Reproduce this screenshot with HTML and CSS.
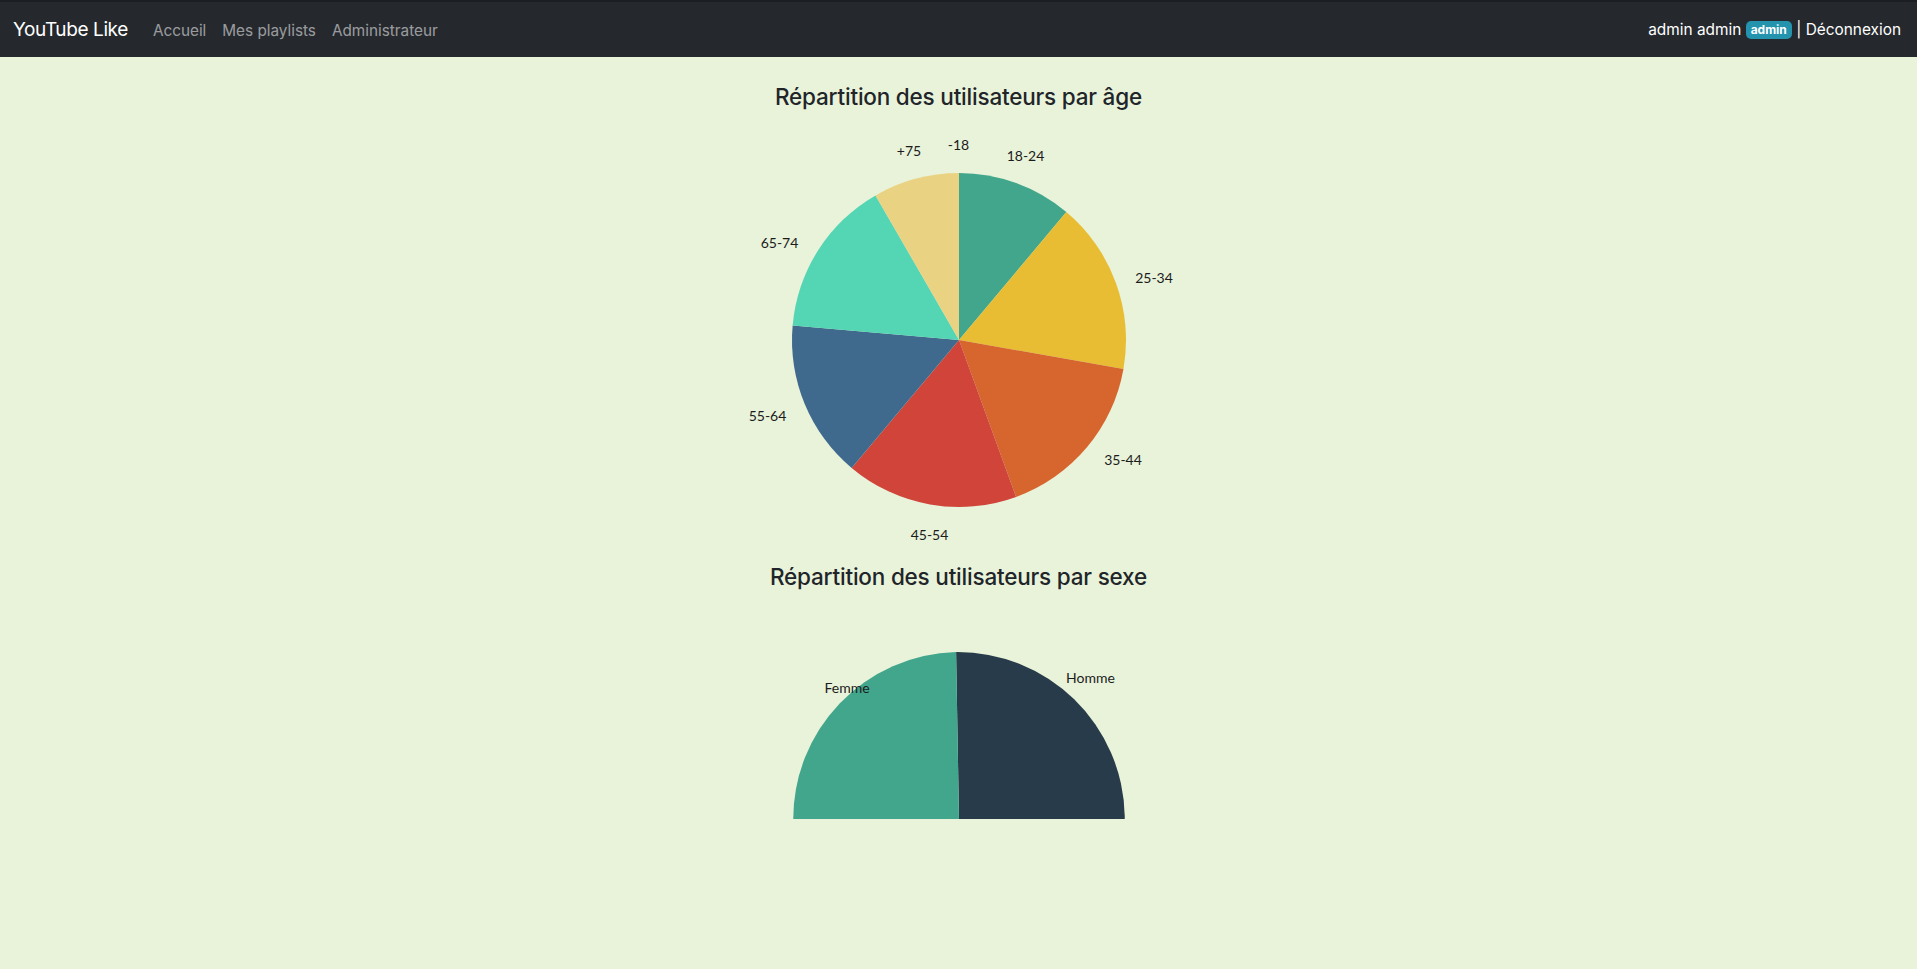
FILE: index.html
```html
<!DOCTYPE html>
<html lang="fr">
<head>
  <meta charset="UTF-8">
  <title>YouTube Like - Statistiques</title>
  <link rel="stylesheet" href="styles.css">
</head>
<body>
  <nav class="navbar">
    <div class="nav-left">
      <a class="brand" href="#">YouTube Like</a>
      <ul class="nav-links">
        <li><a href="#">Accueil</a></li>
        <li><a href="#">Mes playlists</a></li>
        <li><a href="#">Administrateur</a></li>
      </ul>
    </div>
    <div class="nav-right">
      admin admin <span class="badge">admin</span> | <a href="#">Déconnexion</a>
    </div>
  </nav>

  <main class="stats">
    <h4 class="chart-title">Répartition des utilisateurs par âge</h4>
    <svg class="chart chart-age" width="480" height="453" viewBox="0 0 480 453">
      <path d="M240,230 L240,63 A167,167 0 0 1 347.35,102.07 Z" fill="#41a68c"/>
      <path d="M240,230 L347.35,102.07 A167,167 0 0 1 404.46,258.99 Z" fill="#e8bd33"/>
      <path d="M240,230 L404.46,258.99 A167,167 0 0 1 297.12,386.93 Z" fill="#d6652e"/>
      <path d="M240,230 L297.12,386.93 A167,167 0 0 1 132.65,357.93 Z" fill="#d0443a"/>
      <path d="M240,230 L132.65,357.93 A167,167 0 0 1 73.64,215.44 Z" fill="#40698e"/>
      <path d="M240,230 L73.64,215.44 A167,167 0 0 1 156.5,85.38 Z" fill="#54d6b4"/>
      <path d="M240,230 L156.5,85.38 A167,167 0 0 1 240,63 Z" fill="#ead283"/>
      <text x="239.5" y="39.5">-18</text>
      <text x="306.5" y="51">18-24</text>
      <text x="435" y="172.5">25-34</text>
      <text x="404" y="355">35-44</text>
      <text x="210.5" y="430">45-54</text>
      <text x="48.5" y="311">55-64</text>
      <text x="60.5" y="137.5">65-74</text>
      <text x="190" y="46">+75</text>
    </svg>

    <h4 class="chart-title">Répartition des utilisateurs par sexe</h4>
    <svg class="chart chart-sex" width="480" height="229" viewBox="0 0 480 229">
      <path d="M240,229 L237.09,62.03 A167,167 0 0 1 242.91,395.97 Z" fill="#283b4a"/>
      <path d="M240,229 L242.91,395.97 A167,167 0 0 1 237.09,62.03 Z" fill="#41a68c"/>
      <text x="128" y="102.5">Femme</text>
      <text x="371.5" y="92.5">Homme</text>
    </svg>
  </main>
</body>
</html>
```

FILE: styles.css
```css
body {
  margin: 0;
  background-color: #e9f3da;
  font-family: Inter, "Noto Sans", sans-serif;
  color: #212529;
}
a {
  text-decoration: none;
  color: inherit;
}
.navbar {
  height: 55px;
  display: flex;
  flex-flow: row nowrap;
  align-items: center;
  justify-content: space-between;
  padding: 0 16px 0 13px;
  border-top: 2px solid #1b1e22;
  background-color: #25292e;
  color: #fff;
}
.nav-left {
  display: flex;
  align-items: center;
}
.brand {
  margin-right: 17px;
  font-size: 19px;
  letter-spacing: -0.4px;
  color: #fff;
}
.nav-links {
  display: flex;
  margin: 0;
  padding: 0;
  list-style: none;
}
.nav-links a {
  padding: 8px;
  font-size: 15.3px;
  color: rgba(255, 255, 255, 0.55);
}
.nav-right {
  font-size: 15.4px;
}
.badge {
  display: inline-block;
  padding: 3px 5px;
  border-radius: 5px;
  background-color: #2494ae;
  font-size: 12px;
  font-weight: 700;
  line-height: 1;
  vertical-align: 1px;
}
.stats {
  display: flex;
  flex-flow: column nowrap;
  align-items: center;
}
.chart-title {
  margin: 0;
  font-size: 22.5px;
  font-weight: 500;
  line-height: 27px;
  letter-spacing: -0.2px;
}
.chart-title:first-child {
  margin-top: 26px;
}
.chart {
  display: block;
  overflow: hidden;
}
.chart text {
  font-family: Lato, "Noto Sans", sans-serif;
  font-size: 14px;
  fill: #1c1c1c;
  text-anchor: middle;
}
```
